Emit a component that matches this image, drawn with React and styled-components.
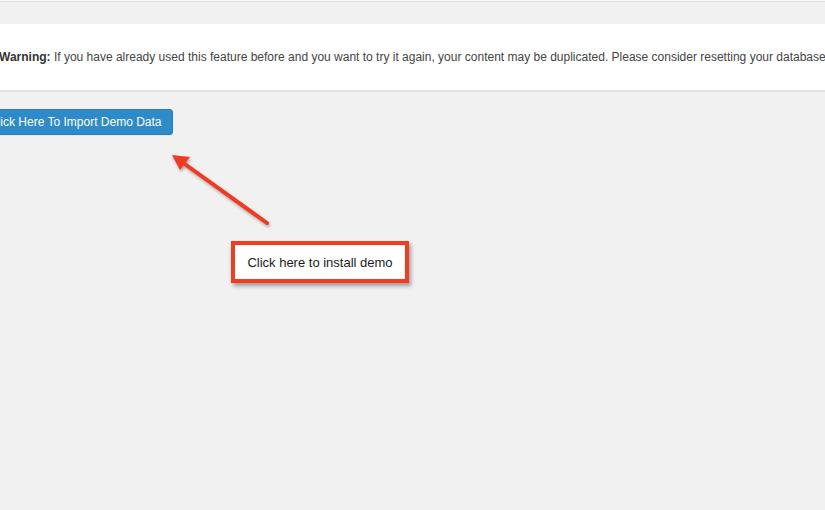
import styled, { createGlobalStyle } from "styled-components"

const GlobalStyle = createGlobalStyle`
    html, body {
        margin: 0;
        padding: 0;
        background: #f1f1f1;
        font-family: "Liberation Sans", Arial, sans-serif;
    }
`

const Page = styled.div`
    position: relative;
    width: 825px;
    height: 510px;
    overflow: hidden;
    background: #f1f1f1;
    border-top: 1px solid #fafafa;
    box-sizing: border-box;
`

const TopRule = styled.div`
    height: 1px;
    background: #dedede;
`

const Content = styled.div`
    display: flex;
    flex-direction: column;
    align-items: flex-start;
    margin-left: -15px;
    padding-top: 22px;
    gap: 17px;
`

const Notice = styled.div`
    width: 900px;
    height: 68px;
    display: flex;
    align-items: center;
    padding-left: 14px;
    background: #fff;
    border-bottom: 2px solid #e2e2e2;
    box-sizing: border-box;
`

const NoticeText = styled.p`
    margin: 0 0 1px;
    font-size: 12px;
    color: #444;
    white-space: nowrap;

    strong {
        color: #333;
    }
`

const ImportButton = styled.button`
    height: 26px;
    margin-left: -8px;
    padding: 0 10px 0 11px;
    border: 1px solid #2a7fbb;
    border-radius: 3px;
    background: #2e8bca;
    color: #fff;
    font-family: inherit;
    font-size: 12px;
    line-height: 24px;
    box-shadow: 0 1px 0 #e6e6e6;
`

const Callout = styled.div`
    position: absolute;
    left: 231px;
    top: 240px;
    width: 178px;
    height: 42px;
    box-sizing: border-box;
    border: 4px solid #f43b1d;
    background: #fff;
    display: flex;
    align-items: center;
    justify-content: center;
    font-size: 13px;
    color: #1a1a1a;
    box-shadow: 2px 3px 4px rgba(0, 0, 0, 0.35);
`

const Arrow = styled.svg`
    position: absolute;
    left: 0;
    top: 0;
    overflow: visible;
    filter: drop-shadow(1px 2px 1.5px rgba(0, 0, 0, 0.3));
`

const App = () => (
    <>
        <GlobalStyle />
        <Page>
            <TopRule />
            <Content>
                <Notice>
                    <NoticeText>
                        <strong>Warning:</strong> If you have already used this feature before and you want to try it
                        again, your content may be duplicated. Please consider resetting your database back to
                        defaults.
                    </NoticeText>
                </Notice>
                <ImportButton>Click Here To Import Demo Data</ImportButton>
            </Content>
            <Arrow width="825" height="510">
                <line x1="267" y1="222" x2="182" y2="161" stroke="#f43a1e" strokeWidth="4" strokeLinecap="round" />
                <polygon points="172,154 190,156 180,169" fill="#f43a1e" />
            </Arrow>
            <Callout>Click here to install demo</Callout>
        </Page>
    </>
)

export default App
